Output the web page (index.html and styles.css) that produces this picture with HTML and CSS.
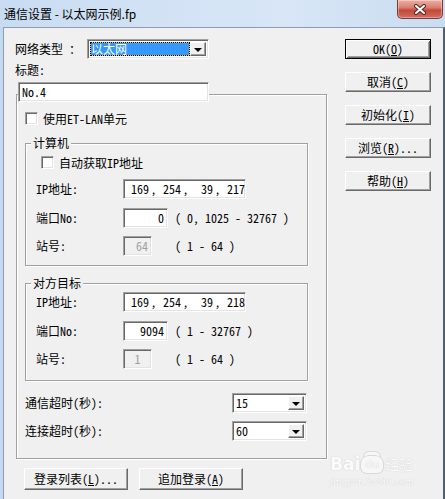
FILE: index.html
```html
<!DOCTYPE html>
<html lang="zh-CN">
<head>
<meta charset="utf-8">
<title>通信设置</title>
<link rel="stylesheet" href="styles.css">
</head>
<body>
<div class="window">
  <div class="titlebar">
    <span class="title">通信设置 - 以太网示例.fp</span>
    <span class="close">
      <svg width="14" height="11" viewBox="0 0 14 11"><path d="M3 2 L11 9 M11 2 L3 9" stroke="#4a2a28" stroke-width="4" stroke-linecap="round" fill="none"/><path d="M3 2 L11 9 M11 2 L3 9" stroke="#fff" stroke-width="2" stroke-linecap="round" fill="none"/></svg>
    </span>
  </div>
  <div class="client">
    <div class="leftcol">
      <div class="row-net">
        <span class="lbl-net">网络类型 ：</span>
        <div class="combo sunken net-combo">
          <div class="combo-text"><span class="hl">以太网</span></div>
          <div class="dd raised"><i class="tri"></i></div>
        </div>
      </div>
      <div class="lbl-title">标题:</div>
      <div class="field sunken title-field">No.4</div>
      <div class="group outer">
        <div class="chk first"><span class="box sunken"></span><span>使用ET-LAN单元</span></div>
        <div class="group inner pc">
          <div class="gtitle">计算机</div>
          <div class="chk second"><span class="box sunken"></span><span>自动获取IP地址</span></div>
          <div class="frow r1">
            <span class="flbl">IP地址:</span>
            <div class="field sunken ip"><span class="oct">169</span><span class="sep">,</span><span class="oct">254</span><span class="sep">,</span><span class="oct">39</span><span class="sep">,</span><span class="oct">217</span></div>
          </div>
          <div class="frow r2">
            <span class="flbl">端口No:</span>
            <span class="fcell"><span class="field sunken port">0</span></span>
            <span class="paren">( 0, 1025 - 32767 )</span>
          </div>
          <div class="frow r3">
            <span class="flbl">站号:</span>
            <span class="fcell"><span class="field sunken station">64</span></span>
            <span class="paren">( 1 - 64 )</span>
          </div>
        </div>
        <div class="group inner target">
          <div class="gtitle">对方目标</div>
          <div class="frow r1t">
            <span class="flbl">IP地址:</span>
            <div class="field sunken ip"><span class="oct">169</span><span class="sep">,</span><span class="oct">254</span><span class="sep">,</span><span class="oct">39</span><span class="sep">,</span><span class="oct">218</span></div>
          </div>
          <div class="frow r2">
            <span class="flbl">端口No:</span>
            <span class="fcell"><span class="field sunken port">9094</span></span>
            <span class="paren">( 1 - 32767 )</span>
          </div>
          <div class="frow r3">
            <span class="flbl">站号:</span>
            <span class="fcell"><span class="field sunken station one">1</span></span>
            <span class="paren">( 1 - 64 )</span>
          </div>
        </div>
        <div class="trow t1">
          <span class="tlbl">通信超时(秒):</span>
          <div class="combo sunken tcombo">
            <div class="combo-text plain">15</div>
            <div class="dd raised"><i class="tri"></i></div>
          </div>
        </div>
        <div class="trow t2">
          <span class="tlbl">连接超时(秒):</span>
          <div class="combo sunken tcombo">
            <div class="combo-text plain">60</div>
            <div class="dd raised"><i class="tri"></i></div>
          </div>
        </div>
      </div>
      <div class="bottom-btns">
        <div class="btn raised wide">登录列表(<u>L</u>)...</div>
        <div class="btn raised wide">追加登录(<u>A</u>)</div>
      </div>
    </div>
    <div class="rightcol">
      <div class="btn default">OK(<u>O</u>)</div>
      <div class="btn raised">取消(<u>C</u>)</div>
      <div class="btn raised">初始化(<u>I</u>)</div>
      <div class="btn raised">浏览(<u>R</u>)...</div>
      <div class="btn raised">帮助(<u>H</u>)</div>
    </div>
  </div>
  <div class="watermark">
    <div class="wm-top"><span class="wm-bai">Bai</span><span class="wm-paw">du</span><span class="wm-jy">经验</span></div>
    <div class="wm-url">jingyan.baidu.com</div>
  </div>
</div>
</body>
</html>
```

FILE: styles.css
```css
* { box-sizing: border-box; }
html, body { margin: 0; padding: 0; }
body {
  width: 445px;
  height: 499px;
  overflow: hidden;
  font-family: "Noto Sans Mono CJK SC", "Noto Sans CJK SC", sans-serif;
  font-size: 12px;
  color: #000;
}
.window {
  position: relative;
  width: 445px;
  height: 499px;
  background: #c4d8ee;
  display: flex;
  flex-direction: column;
  overflow: hidden;
}
.titlebar {
  height: 27px;
  flex: none;
  display: flex;
  justify-content: space-between;
  align-items: flex-start;
  background: linear-gradient(90deg, #c8dcf1 0%, #d3e3f5 40%, #d8e6f6 65%, #c9dcf1 100%);
}
.title {
  font-family: "Noto Sans CJK SC", sans-serif;
  font-size: 12px;
  line-height: 27px;
  padding-left: 4px;
  color: #000;
}
.close {
  width: 46px;
  height: 19px;
  margin-right: 2px;
  border: 1px solid #7b3a33;
  border-top: none;
  border-radius: 0 0 5px 5px;
  background: linear-gradient(#eab0a4 0%, #dc8272 40%, #c4483b 58%, #d36e5d 100%);
  box-shadow: inset 0 0 0 1px rgba(255,255,255,.35);
  display: flex;
  align-items: center;
  justify-content: center;
}
.client {
  flex: 1;
  margin-left: 3px;
  border-left: 1px solid #8d9db2;
  border-top: 1px solid #8d9db2;
  border-right: 2px solid #4f5f70;
  background: #f0f0f0;
  display: flex;
  align-items: flex-start;
}

/* 3D styles */
.sunken {
  border: 1px solid;
  border-color: #a0a0a0 #fff #fff #a0a0a0;
  box-shadow: inset 1px 1px 0 #696969, inset -1px -1px 0 #e3e3e3;
  background: #fff;
}
.raised {
  border: 1px solid;
  border-color: #fff #696969 #696969 #fff;
  box-shadow: inset -1px -1px 0 #a0a0a0, inset 1px 1px 0 #f0f0f0;
  background: #f0f0f0;
}

/* left column */
.leftcol {
  margin-left: 12px;
  padding-top: 11px;
  width: 311px;
  display: flex;
  flex-direction: column;
  align-items: flex-start;
}
.row-net {
  height: 20px;
  display: flex;
  align-items: center;
}
.lbl-net {
  width: 72px;
  margin-left: -1px;
  line-height: 16px;
}
.combo {
  height: 20px;
  display: flex;
  padding: 2px;
}
.net-combo { width: 122px; }
.combo-text {
  flex: 1;
  display: flex;
  line-height: 14px;
}
.hl {
  flex: 1;
  background: #3399ff;
  color: #fff;
  padding-left: 1px;
  outline: 1px dotted #000;
  outline-offset: -1px;
  box-shadow: inset 0 0 0 1px #e8c070;
}
.dd {
  width: 16px;
  display: flex;
  align-items: center;
  justify-content: center;
}
.tri {
  width: 0;
  height: 0;
  border-left: 4px solid transparent;
  border-right: 4px solid transparent;
  border-top: 4px solid #000;
  margin-top: 1px;
}
.lbl-title {
  margin-top: 3px;
  line-height: 16px;
  margin-left: -1px;
}
.title-field {
  position: relative;
  z-index: 1;
  margin-top: 4px;
  margin-left: 2px;
  width: 191px;
  height: 20px;
  padding-left: 3px;
  line-height: 18px;
}

/* groups */
.group {
  border: 1px solid #a0a0a0;
  box-shadow: inset 1px 1px 0 #fff, 1px 1px 0 #fff;
}
.outer {
  margin-top: -8px;
  width: 311px;
  padding: 0 18px 17px 8px;
}
.inner {
  width: 283px;
  padding: 0 0 0 10px;
}
.pc { margin-top: 18px; padding-bottom: 9px; }
.target { margin-top: 17px; padding-bottom: 11px; }
.gtitle {
  display: table;
  margin-top: -8px;
  margin-left: -5px;
  padding: 0 2px;
  line-height: 14px;
  height: 14px;
  background: #f0f0f0;
}

.chk {
  display: flex;
  align-items: center;
  height: 13px;
  line-height: 13px;
}
.chk .box {
  width: 13px;
  height: 13px;
  flex: none;
  margin-right: 5px;
}
.chk.first { margin-top: 17px; }
.chk.second { margin-top: 6px; margin-left: 5px; }

.frow {
  display: flex;
  align-items: center;
  height: 20px;
}
.r1 { margin-top: 10px; }
.r1t { margin-top: 2px; }
.r2 { margin-top: 9px; }
.r3 { margin-top: 8px; }
.flbl { width: 87px; line-height: 16px; }
.field { display: block; height: 20px; line-height: 18px; }
.ip {
  width: 123px;
  display: flex;
  padding-left: 2px;
}
.oct { width: 23px; text-align: right; }
.sep { width: 9px; text-align: center; }
.fcell { width: 52px; display: flex; }
.port {
  width: 45px;
  text-align: right;
  padding-right: 3px;
}
.station {
  width: 29px;
  text-align: right;
  padding-right: 3px;
  color: #a0a0a0;
  background: #f0f0f0;
}
.station.one { text-align: center; padding-right: 0; }
.paren { line-height: 16px; white-space: pre; }

.trow {
  display: flex;
  align-items: center;
  height: 20px;
}
.t1 { margin-top: 12px; }
.t2 { margin-top: 8px; }
.tlbl { width: 207px; line-height: 16px; }
.tcombo { width: 75px; }
.combo-text.plain { background: #fff; padding-left: 1px; line-height: 14px; }

/* buttons */
.btn {
  width: 86px;
  height: 20px;
  display: flex;
  align-items: center;
  justify-content: center;
  line-height: 14px;
  white-space: pre;
}
.btn u { text-underline-offset: 1px; }
.btn.default {
  border: 1px solid #000;
  background: #f0f0f0;
  box-shadow: inset 1px 1px 0 #fff, inset -1px -1px 0 #696969, inset 2px 2px 0 #f0f0f0, inset -2px -2px 0 #a0a0a0;
}
.bottom-btns {
  margin-top: 9px;
  margin-left: 8px;
  display: flex;
  gap: 11px;
}
.btn.wide { width: 104px; height: 22px; }
.rightcol {
  margin-left: 18px;
  padding-top: 11px;
  display: flex;
  flex-direction: column;
  gap: 13px;
}

/* watermark overlay */
.watermark {
  position: absolute;
  left: 330px;
  top: 446px;
  width: 90px;
  color: #fbfbfb;
  text-shadow: 0 0 1px #d4d4d4, 0 0 1px #d4d4d4;
  font-family: "DejaVu Sans", sans-serif;
  pointer-events: none;
}
.wm-top { display: flex; align-items: flex-end; height: 28px; }
.wm-bai { font-size: 17px; font-weight: bold; line-height: 17px; margin-bottom: 1px; }
.wm-paw {
  width: 22px;
  height: 17px;
  margin: 0 2px 1px 1px;
  border-radius: 8px 8px 6px 6px;
  background: #f7f7f7;
  box-shadow: 0 0 0 1px #dadada, 0 -7px 0 -3px #f7f7f7, 0 -7px 0 -2px #dadada;
  font-size: 11px;
  line-height: 17px;
  text-align: center;
}
.wm-jy { font-family: "Noto Sans CJK SC", sans-serif; font-size: 14px; line-height: 17px; margin-bottom: 1px; }
.wm-url { font-size: 9px; line-height: 10px; margin-top: 3px; font-family: "DejaVu Serif", serif; }
```
